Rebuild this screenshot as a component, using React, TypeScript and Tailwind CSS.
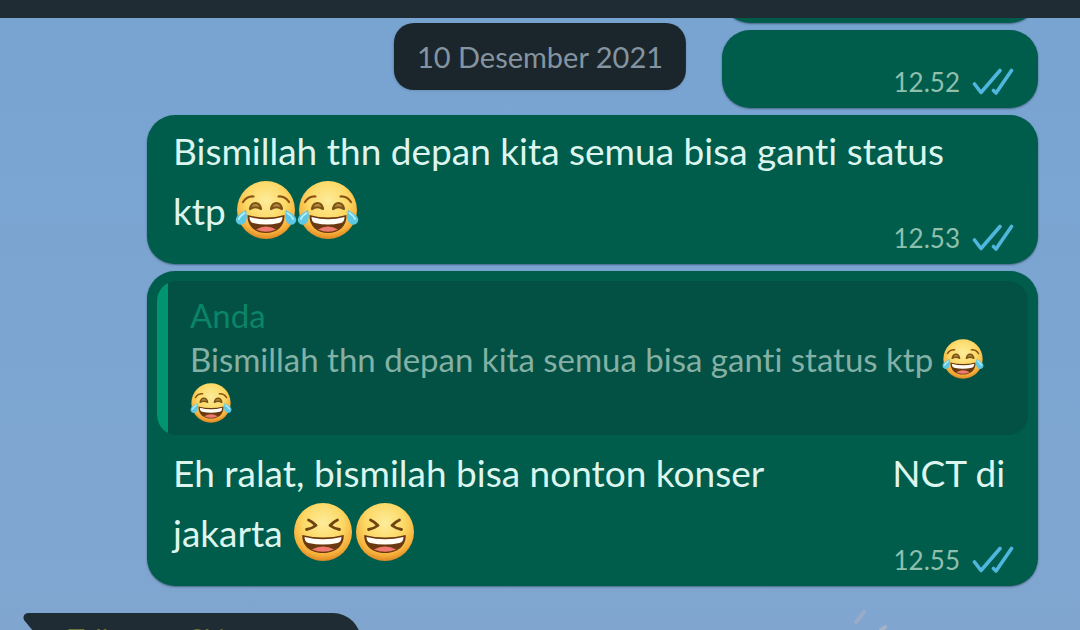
import React, { useId } from 'react';

const QUOTED_TEXT = 'Bismillah thn depan kita semua bisa ganti status ktp';

const FaceGradient: React.FC<{ id: string }> = ({ id }) => (
  <defs>
    <radialGradient id={id} cx="50%" cy="34%" r="68%">
      <stop offset="0" stopColor="#fdec9b" />
      <stop offset="0.5" stopColor="#fcd966" />
      <stop offset="0.82" stopColor="#f6b03a" />
      <stop offset="1" stopColor="#d97f20" />
    </radialGradient>
  </defs>
);

const Mouth: React.FC = () => (
  <>
    <path d="M12.5 36 Q31 41 49.5 36 C50 47 42 54 31 54 C20 54 12 47 12.5 36Z" fill="#6b3910" />
    <path d="M14.5 38 Q31 42.5 47.5 38 Q47.5 43 44 44 Q31 47 18 44 Q14.5 43 14.5 38Z" fill="#fffdf5" />
    <path d="M21 50.5 Q31 44.5 41 50.5 Q31 55 21 50.5Z" fill="#ee7a70" />
  </>
);

const JoyEmoji: React.FC<{ className: string }> = ({ className }) => {
  const id = useId();
  return (
    <svg viewBox="0 0 62 62" className={className} role="img" aria-label="😂">
      <FaceGradient id={id} />
      <circle cx="31" cy="31" r="29" fill={`url(#${id})`} />
      <g fill="none" stroke="#8a5216" strokeWidth="2.2" strokeLinecap="round">
        <path d="M8 23 Q12 17 18.5 17.5" />
        <path d="M43.5 17.5 Q50 17 54 23" />
      </g>
      <g fill="#b98a3a" stroke="#7a5418" strokeWidth="2.2" strokeLinecap="round" strokeLinejoin="round">
        <path d="M15 30 Q16 24 20.5 24 Q25 24 26 30 Q20.5 26.5 15 30Z" />
        <path d="M36 30 Q37 24 41.5 24 Q46 24 47 30 Q41.5 26.5 36 30Z" />
      </g>
      <Mouth />
      <path d="M11 31 Q13 40 10 43.5 Q6.5 47 3 45 Q-1 42 2 37.5 Q5 34 11 31Z" fill="#5cc8e4" />
      <path d="M51 31 Q49 40 52 43.5 Q55.5 47 59 45 Q63 42 60 37.5 Q57 34 51 31Z" fill="#5cc8e4" />
      <path d="M9.5 34 Q5 37 4 40" fill="none" stroke="#b5ecf8" strokeWidth="2" strokeLinecap="round" />
      <path d="M52.5 34 Q57 37 58 40" fill="none" stroke="#b5ecf8" strokeWidth="2" strokeLinecap="round" />
    </svg>
  );
};

const LaughEmoji: React.FC<{ className: string }> = ({ className }) => {
  const id = useId();
  return (
    <svg viewBox="0 0 62 62" className={className} role="img" aria-label="😆">
      <FaceGradient id={id} />
      <circle cx="31" cy="31" r="29" fill={`url(#${id})`} />
      <g fill="none" stroke="#6f4210" strokeWidth="2.8" strokeLinecap="round" strokeLinejoin="round">
        <path d="M16.5 19 Q21 21 24 24.5 Q20 27.5 14.5 28.5" />
        <path d="M45.5 19 Q41 21 38 24.5 Q42 27.5 47.5 28.5" />
      </g>
      <g transform="translate(31 34) scale(1.12 1) translate(-31 -36)">
        <Mouth />
      </g>
    </svg>
  );
};

const ReadTicks: React.FC = () => (
  <svg viewBox="0 0 42 28" className="h-7 w-[42px]" role="img" aria-label="Dibaca">
    <g fill="none" stroke="#4fb6de" strokeWidth="3.6" strokeLinecap="round" strokeLinejoin="round">
      <path d="M2.5 16 L9 24.5 L28 2.5" />
      <path d="M21.5 22.5 L24 25 L39.5 2.5" />
    </g>
  </svg>
);

const MessageTime: React.FC<{ time: string; className?: string }> = ({ time, className = '' }) => (
  <span className={`flex h-9 items-center gap-3 pr-6 text-[26px] leading-9 text-[#8fc0ae] ${className}`}>
    <time>{time}</time>
    <ReadTicks />
  </span>
);

const bubble = 'shrink-0 rounded-[28px] bg-[#005c4b] pb-2 shadow-[0_1px_2px_rgba(20,40,60,0.5)]';
const body = 'flow-root pl-[26px] text-[37px] leading-[60px] text-[#dcf5ee]';
const bigEmoji = 'inline-block size-[62px] -mt-3.5 -mb-0.5 align-middle';
const smallEmoji = 'inline-block size-[42px] -mt-3 -mb-0.5 align-middle';

const App: React.FC = () => {
  return (
    <div className="relative flex h-screen flex-col overflow-hidden bg-linear-to-b from-[#78a4d2] to-[#80a6d0] font-[Lato,sans-serif] [font-variant-ligatures:none]">
      <header className="relative z-10 h-[18px] shrink-0 bg-[#1f2c34]" />

      {/* Wallpaper specks */}
      <svg viewBox="0 0 40 24" className="absolute bottom-0 right-[190px] h-6 w-10 opacity-40" aria-hidden="true">
        <path d="M6 16 L14 6" stroke="#c3b2bd" strokeWidth="4" strokeLinecap="round" />
        <path d="M31 24 L35 21" stroke="#d6c4c0" strokeWidth="4" strokeLinecap="round" />
      </svg>

      {/* Floating date */}
      <div className="absolute left-1/2 top-[23px] z-10 -translate-x-1/2 rounded-[20px] bg-[#1b262c] px-[23px] text-[29px] leading-[67px] text-[#8494a0] shadow-sm">
        10 Desember 2021
      </div>

      <main className="flex min-h-0 flex-1 flex-col gap-[7px] overflow-hidden">
        <div className="-mt-[73px] mr-[42px] flex shrink-0 flex-col items-end gap-[7px]">
          <div className={`${bubble} h-[78px] w-[316px]`} />
          <div className={`${bubble} flex h-[78px] w-[316px] items-end justify-end`}>
            <MessageTime time="12.52" />
          </div>
        </div>

        <article className={`${bubble} ml-[147px] mr-[42px] pt-[6px]`}>
          <p className={body}>
            Bismillah thn depan kita semua bisa ganti status <br />
            ktp <JoyEmoji className={bigEmoji} />
            <JoyEmoji className={bigEmoji} />
            <MessageTime time="12.53" className="float-right mt-[39px]" />
          </p>
        </article>

        <article className={`${bubble} ml-[147px] mr-[42px] pt-[10px]`}>
          <blockquote className="mx-[10px] flex overflow-hidden rounded-[20px] bg-[#025144] text-[33px] leading-[44px]">
            <div className="w-[11px] shrink-0 bg-[#029471]" />
            <div className="pb-[10px] pl-[22px] pr-5 pt-3">
              <p className="text-[#0b8468]">Anda</p>
              <p className="text-[#84b0a5]">
                {QUOTED_TEXT} <JoyEmoji className={smallEmoji} />
                <JoyEmoji className={smallEmoji} />
              </p>
            </div>
          </blockquote>
          <p className={`${body} mt-2`}>
            Eh ralat, bismilah bisa nonton konser
            <span className="ml-[128px]">NCT di</span>
            <br />
            jakarta <LaughEmoji className={bigEmoji} />
            <LaughEmoji className={bigEmoji} />
            <MessageTime time="12.55" className="float-right mt-[39px]" />
          </p>
        </article>

        {/* Incoming message, scrolled mostly out of view */}
        <article className="ml-[23px] mt-5 flex w-[338px] shrink-0">
          <svg viewBox="0 0 20 24" className="h-6 w-5" aria-hidden="true">
            <path d="M5 0 H20 V24 H15 L1 7 Q-1 1 5 0Z" fill="#1f2c34" />
          </svg>
          <div className="h-20 flex-1 rounded-tr-[28px] bg-[#1f2c34] pl-[25px] pt-2 text-[28px] leading-9 text-[#6c7638]">
            Tallyanna Skist
          </div>
        </article>
      </main>
    </div>
  );
};

export default App;
